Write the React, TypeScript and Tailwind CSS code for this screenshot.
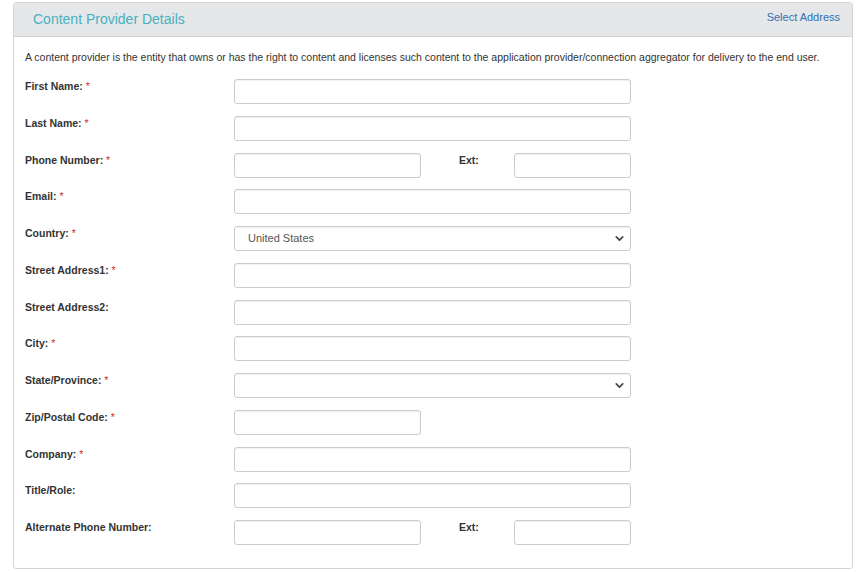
import { ChevronDown } from "lucide-react";

type Row = {
  label: string;
  required?: boolean;
  kind: "text" | "short" | "phone" | "select";
  value?: string;
};

const rows: Row[] = [
  { label: "First Name:", required: true, kind: "text" },
  { label: "Last Name:", required: true, kind: "text" },
  { label: "Phone Number:", required: true, kind: "phone" },
  { label: "Email:", required: true, kind: "text" },
  { label: "Country:", required: true, kind: "select", value: "United States" },
  { label: "Street Address1:", required: true, kind: "text" },
  { label: "Street Address2:", kind: "text" },
  { label: "City:", required: true, kind: "text" },
  { label: "State/Province:", required: true, kind: "select", value: "" },
  { label: "Zip/Postal Code:", required: true, kind: "short" },
  { label: "Company:", required: true, kind: "text" },
  { label: "Title/Role:", kind: "text" },
  { label: "Alternate Phone Number:", kind: "phone" },
];

const inputCls =
  "h-[25px] rounded-[3px] border border-[#cccccc] bg-white shadow-[inset_0_1px_1px_rgba(0,0,0,0.06)]";

export default function App() {
  return (
    <div
      className="w-[867px] h-[572px] bg-white pt-[2px]"
      style={{ fontFamily: '"Liberation Sans", Arial, sans-serif' }}
    >
      <div className="ml-[13px] w-[840px] h-[567px] border border-[#d4d4d4] rounded-[3px] bg-white overflow-hidden">
        {/* Header */}
        <div className="h-[34px] bg-[#e6e7e8] border-b border-[#d4d4d4] flex items-center justify-between pl-[19px] pr-[12px]">
          <span className="text-[14px] text-[#48b0c0]">Content Provider Details</span>
          <a className="text-[11px] text-[#2f6fb5] -mt-[4px]">Select Address</a>
        </div>

        <div className="pl-[11px] pt-[13px]">
          <p className="text-[10.5px] text-[#333333] leading-[14px] whitespace-nowrap">
            A content provider is the entity that owns or has the right to content and licenses such
            content to the application provider/connection aggregator for delivery to the end user.
          </p>

          <div className="mt-[15px] flex flex-col gap-y-[11.75px]">
            {rows.map((r) => (
              <FormRow key={r.label} row={r} />
            ))}
          </div>
        </div>
      </div>
    </div>
  );
}

function FormRow({ row }: { row: Row }) {
  return (
    <div className="flex items-start h-[25px]">
      <div className="w-[209px] text-[10.5px] font-bold text-[#333333] leading-[14px]">
        {row.label}
        {row.required && <span className="text-[#c9302c] font-normal"> *</span>}
      </div>
      {row.kind === "text" && <div className={`${inputCls} w-[397px]`} />}
      {row.kind === "short" && <div className={`${inputCls} w-[187px]`} />}
      {row.kind === "phone" && (
        <div className="flex items-start">
          <div className={`${inputCls} w-[187px]`} />
          <div className="w-[93px] pl-[38px] text-[10.5px] font-bold text-[#333333] leading-[14px]">
            Ext:
          </div>
          <div className={`${inputCls} w-[117px]`} />
        </div>
      )}
      {row.kind === "select" && (
        <div className={`${inputCls} w-[397px] flex items-center justify-between pl-[13px] pr-[4px]`}>
          <span className="text-[11px] text-[#555555]">{row.value}</span>
          <ChevronDown className="w-[13px] h-[13px] text-[#444444]" strokeWidth={3} />
        </div>
      )}
    </div>
  );
}
